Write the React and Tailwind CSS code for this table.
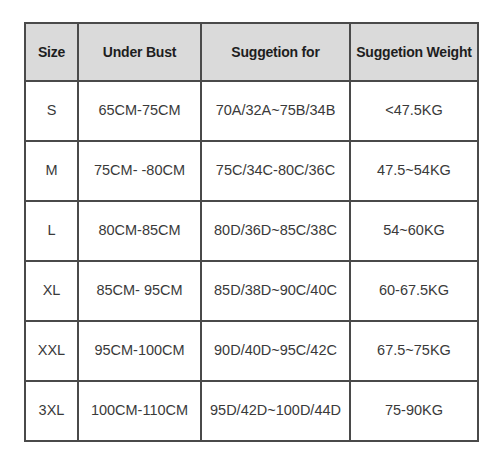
export default function App() {
  const rows = [
    ["S", "65CM-75CM", "70A/32A~75B/34B", "<47.5KG"],
    ["M", "75CM- -80CM", "75C/34C-80C/36C", "47.5~54KG"],
    ["L", "80CM-85CM", "80D/36D~85C/38C", "54~60KG"],
    ["XL", "85CM- 95CM", "85D/38D~90C/40C", "60-67.5KG"],
    ["XXL", "95CM-100CM", "90D/40D~95C/42C", "67.5~75KG"],
    ["3XL", "100CM-110CM", "95D/42D~100D/44D", "75-90KG"],
  ];
  return (
    <div className="w-[500px] h-[460px] bg-white pt-[22px] pl-[24px]" style={{ fontFamily: '"Liberation Sans", Arial, sans-serif' }}>
      <table className="border-collapse table-fixed border-2 border-[#4a4a4a]">
        <colgroup>
          <col className="w-[53px]" />
          <col className="w-[123px]" />
          <col className="w-[149px]" />
          <col className="w-[128px]" />
        </colgroup>
        <thead>
          <tr className="h-[58px] bg-[#dadada]">
            {["Size", "Under Bust", "Suggetion for", "Suggetion Weight"].map((h) => (
              <th key={h} className="border-2 border-[#4a4a4a] text-center text-[14px] font-bold text-[#1e1e1e] p-0 whitespace-nowrap tracking-[-0.2px]">
                {h}
              </th>
            ))}
          </tr>
        </thead>
        <tbody>
          {rows.map((r, i) => (
            <tr key={i} className="h-[60px]">
              {r.map((c, j) => (
                <td key={j} className="border-2 border-[#4a4a4a] text-center text-[14.5px] text-[#3a3a3a] p-0 whitespace-nowrap">
                  {c}
                </td>
              ))}
            </tr>
          ))}
        </tbody>
      </table>
    </div>
  );
}
